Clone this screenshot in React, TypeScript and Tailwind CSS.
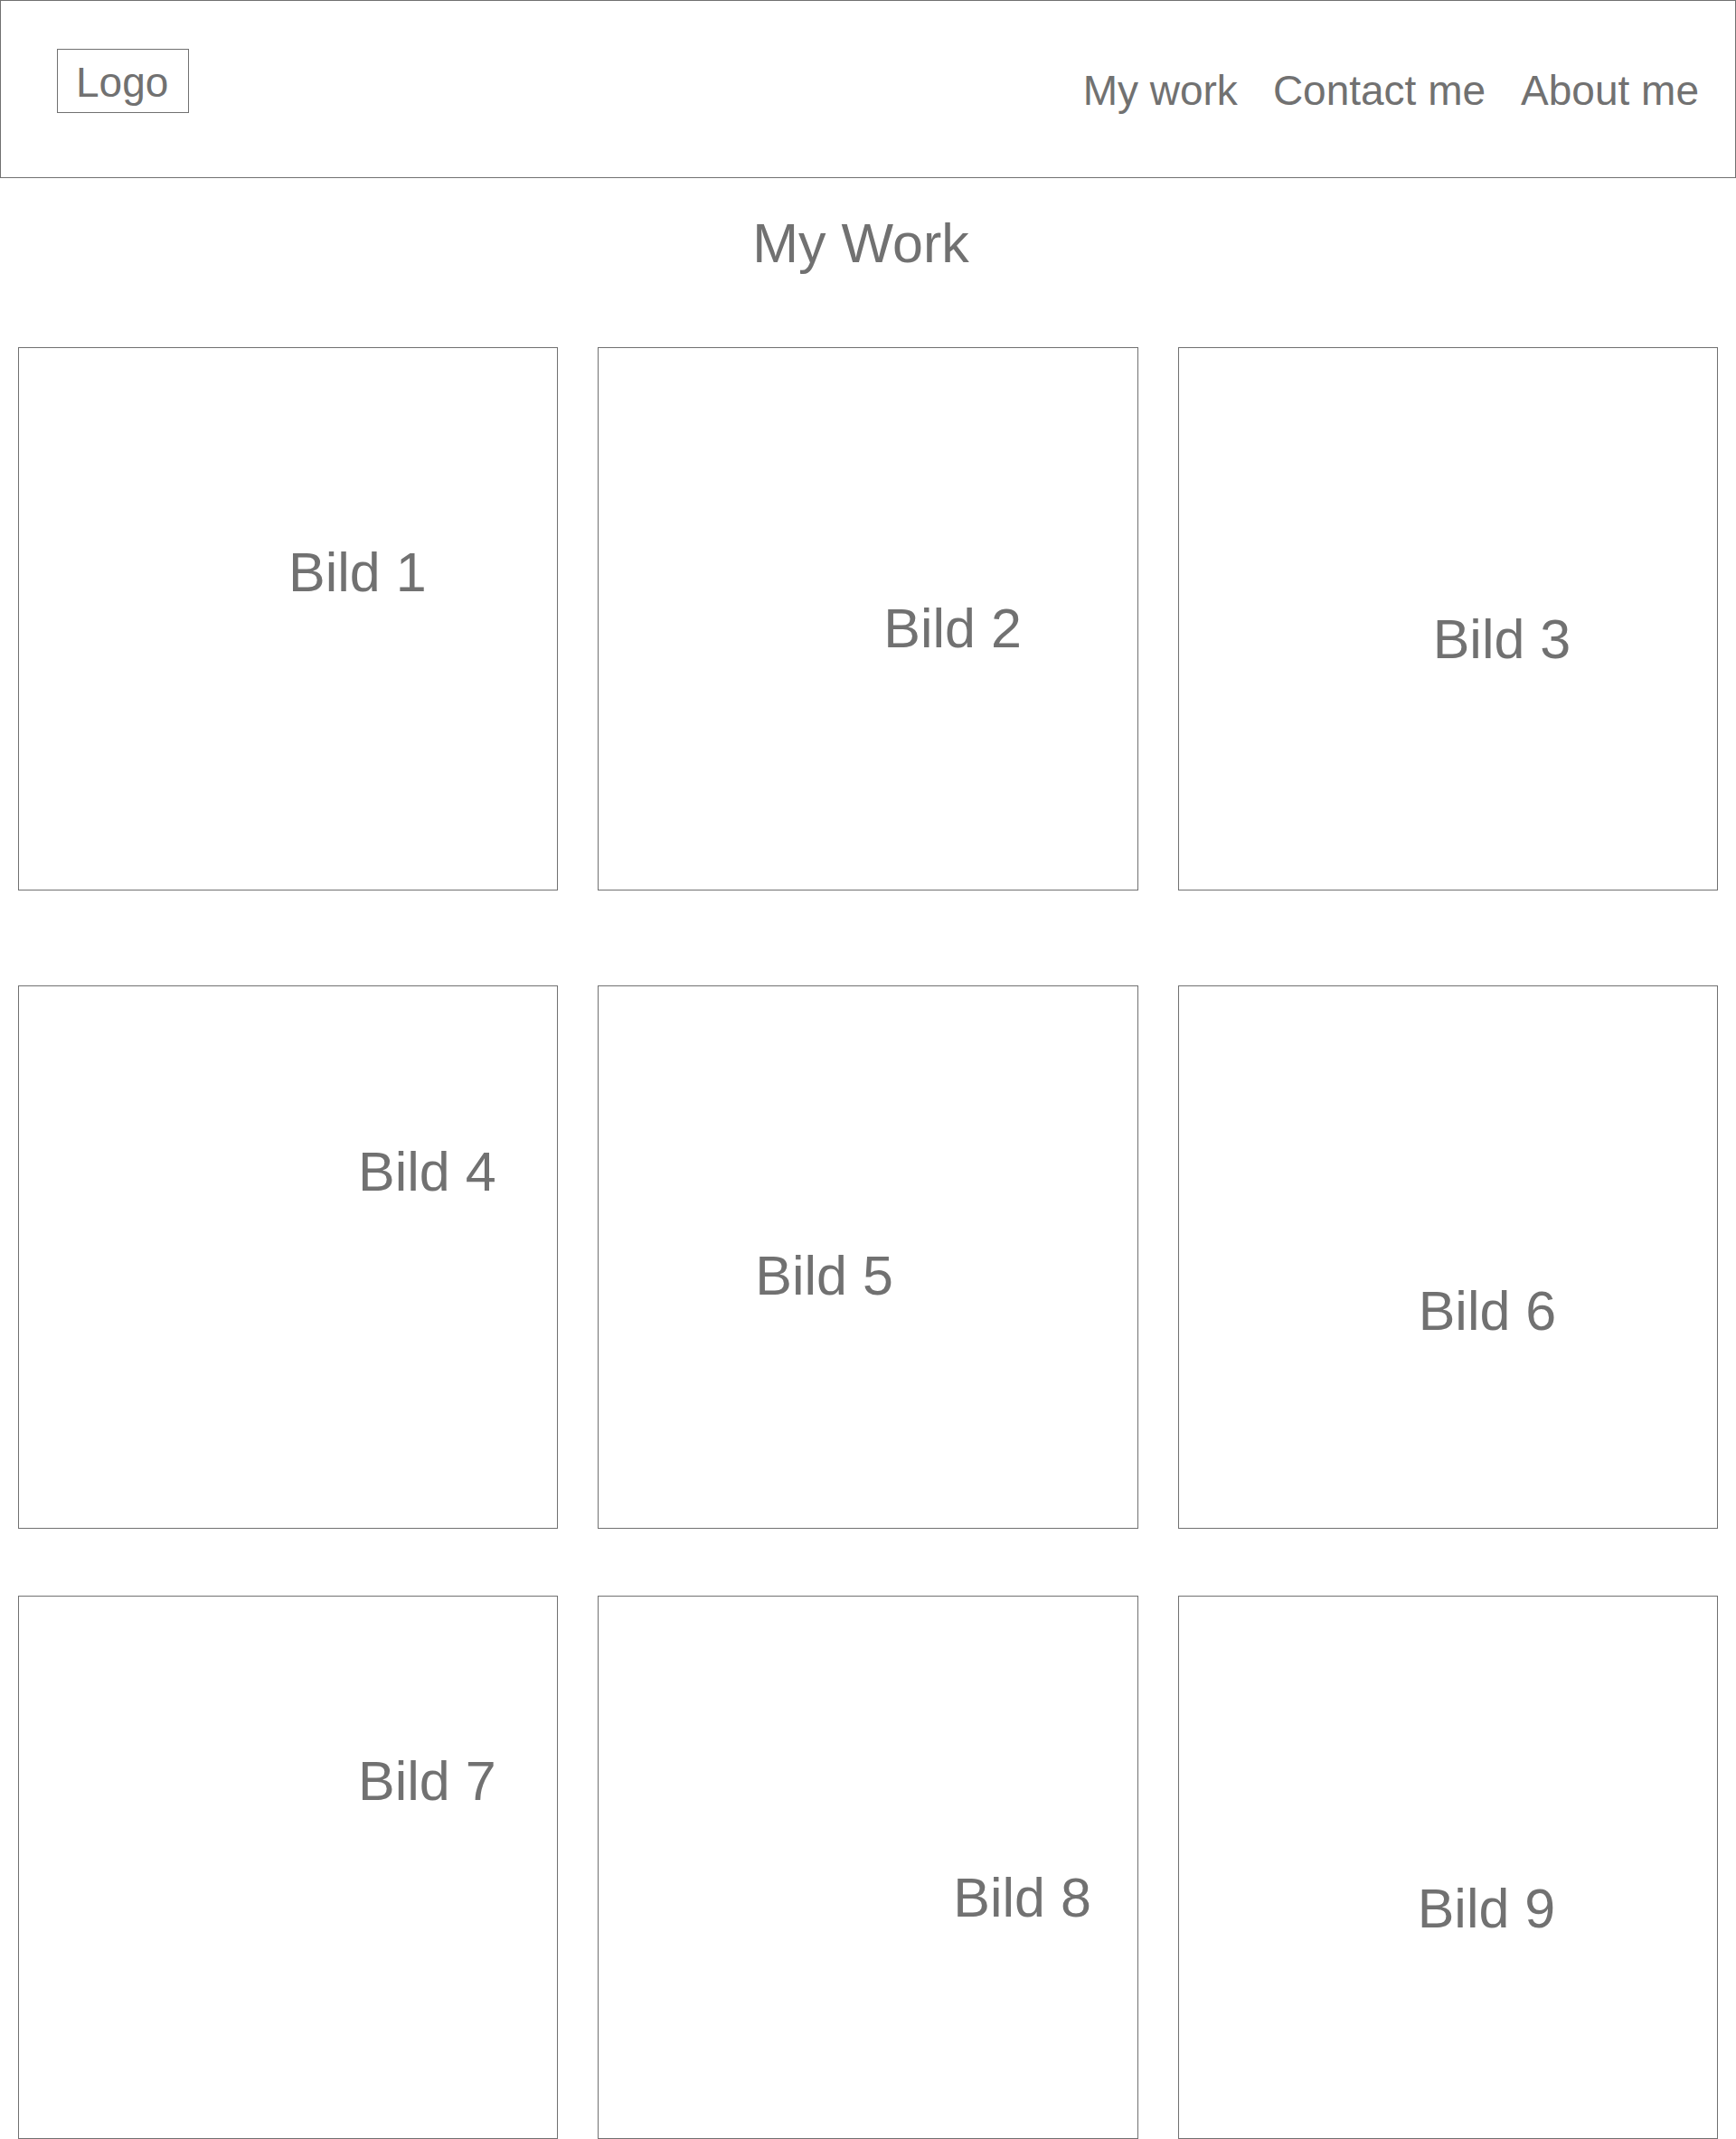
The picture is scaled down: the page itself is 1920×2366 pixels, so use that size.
import React from 'react';

type Tile = { label: string; pad: string };

const rows: Tile[][] = [
  [
    { label: 'Bild 1', pad: 'pl-[298px] pt-[218px]' },
    { label: 'Bild 2', pad: 'pl-[315px] pt-[280px]' },
    { label: 'Bild 3', pad: 'pl-[281px] pt-[292px]' },
  ],
  [
    { label: 'Bild 4', pad: 'pl-[375px] pt-[175px]' },
    { label: 'Bild 5', pad: 'pl-[173px] pt-[290px]' },
    { label: 'Bild 6', pad: 'pl-[265px] pt-[329px]' },
  ],
  [
    { label: 'Bild 7', pad: 'pl-[375px] pt-[174px]' },
    { label: 'Bild 8', pad: 'pl-[392px] pt-[303px]' },
    { label: 'Bild 9', pad: 'pl-[264px] pt-[315px]' },
  ],
];

function Header() {
  return (
    <header className="h-[197px] border border-[#717171] flex justify-between items-start pt-[53px] pl-[62px] pr-[40px]">
      <div className="w-[146px] h-[71px] border border-[#717171] pl-[20px] pt-[13px]">
        <span className="text-[46px] leading-none">Logo</span>
      </div>
      <nav className="flex gap-[39px] mt-[23px] text-[46px] leading-none">
        <a>My work</a>
        <a>Contact me</a>
        <a>About me</a>
      </nav>
    </header>
  );
}

function Card({ tile }: { tile: Tile }) {
  return (
    <div className={`h-[601px] border border-[#717171] ${tile.pad}`}>
      <span className="text-[61px] leading-none whitespace-nowrap">{tile.label}</span>
    </div>
  );
}

export default function App() {
  return (
    <div
      className="w-[1920px] min-h-[2366px] bg-white text-[#717171]"
      style={{ fontFamily: '"Liberation Sans", Arial, sans-serif' }}
    >
      <Header />

      <h1 className="mt-[42px] pr-[16px] text-center text-[61px] leading-none font-normal">My Work</h1>

      <main className="px-[20px] mt-[84px]">
        <div className="grid grid-cols-3 gap-x-[44px]">
          {rows[0].map((t) => (
            <Card key={t.label} tile={t} />
          ))}
        </div>
        <div className="grid grid-cols-3 gap-x-[44px] mt-[105px]">
          {rows[1].map((t) => (
            <Card key={t.label} tile={t} />
          ))}
        </div>
        <div className="grid grid-cols-3 gap-x-[44px] mt-[74px]">
          {rows[2].map((t) => (
            <Card key={t.label} tile={t} />
          ))}
        </div>
      </main>
    </div>
  );
}
